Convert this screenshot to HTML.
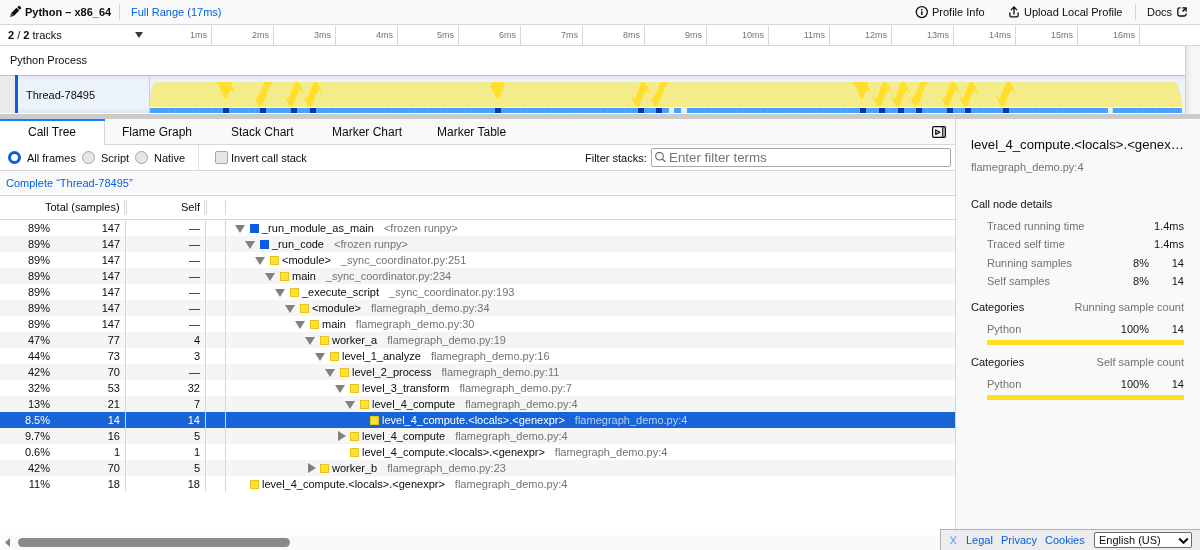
<!DOCTYPE html>
<html><head><meta charset="utf-8"><style>
*{box-sizing:border-box;margin:0;padding:0}
html,body{width:1200px;height:550px;overflow:hidden;background:#fff;will-change:transform;font-family:"Liberation Sans",sans-serif;font-size:11px;color:#0c0c0d;position:relative}
.a{position:absolute;white-space:nowrap}
.blue{color:#0060df}
.hl{position:absolute;height:1px}
.vl{position:absolute;width:1px}
.tlabel{position:absolute;top:30px;color:#737373;font-size:9px;line-height:10px;text-align:right;width:40px}
.tab{top:119px;height:26px;font-size:12px;line-height:26px}
.row{left:0;width:955px;height:16px;font-size:11px;line-height:16px}
.row.odd{background:#f5f5f5}
.row.sel{background:#1863d6;color:#fff}
.c{position:absolute;top:0;height:16px}
.pct{right:905px;text-align:right}
.cnt{right:835px;text-align:right}
.slf{right:755px;text-align:right}
.rv{position:absolute;top:0;width:1px;height:16px;background:#d7d7db}
.sq{position:absolute;top:4px;width:9px;height:9px}
.y{background:#ffe22e;border:1px solid #e3c41c}
.b{background:#0b5be3}
.tri{position:absolute;top:5px;width:0;height:0;border-left:5px solid transparent;border-right:5px solid transparent;border-top:8px solid #808080}
.trr{position:absolute;top:3px;width:0;height:0;border-top:5px solid transparent;border-bottom:5px solid transparent;border-left:8px solid #808080}
.fn{position:absolute;top:0}
.lib{color:#737373;margin-left:10px}
.sel .lib{color:#b9d1f5}
.sd{color:#737373}
</style></head><body>
<div class="a" style="left:0;top:0;width:1200px;height:24px;background:#f9f9fa"></div>
<div class="hl" style="left:0;top:24px;width:1200px;background:#d7d7db"></div>
<svg class="a" style="left:6px;top:4px" width="20" height="16" viewBox="6 4 20 16"><g transform="rotate(45 15.25 11.8)"><rect x="13.3" y="4.6" width="3.9" height="2.7" rx="1.4" fill="#0c0c0d"/><rect x="13.3" y="8.1" width="3.9" height="7.3" fill="#0c0c0d"/><path d="M13.3 15.4 L17.2 15.4 L15.25 19 Z" fill="#0c0c0d"/><circle cx="15.25" cy="16.3" r="0.55" fill="#f9f9fa"/></g></svg>
<div class="a" style="left:25px;top:6px;font-weight:bold">Python – x86_64</div>
<div class="vl" style="left:119px;top:4px;height:16px;background:#d7d7db"></div>
<div class="a blue" style="left:131px;top:6px">Full Range (17ms)</div>
<svg class="a" style="left:912px;top:2px" width="20" height="20" viewBox="912 2 20 20"><circle cx="921.8" cy="12.1" r="5.55" fill="none" stroke="#0c0c0d" stroke-width="1.3"/><ellipse cx="921.8" cy="9.8" rx="0.95" ry="0.7" fill="#0c0c0d"/><rect x="921.05" y="11.3" width="1.5" height="3.6" fill="#0c0c0d"/></svg>
<div class="a" style="left:932px;top:6px">Profile Info</div>
<svg class="a" style="left:1004px;top:2px" width="20" height="20" viewBox="1004 2 20 20"><path d="M1009.9 12.4 V15.5 Q1009.9 16.8 1011.2 16.8 H1016.8 Q1018.1 16.8 1018.1 15.5 V12.4" fill="none" stroke="#0c0c0d" stroke-width="1.3"/><path d="M1014 14.4 V7.2 M1010.9 10.1 L1014 7 L1017.1 10.1" fill="none" stroke="#0c0c0d" stroke-width="1.3"/></svg>
<div class="a" style="left:1024px;top:6px">Upload Local Profile</div>
<div class="vl" style="left:1135px;top:4px;height:16px;background:#d7d7db"></div>
<div class="a" style="left:1147px;top:6px">Docs</div>
<svg class="a" style="left:1172px;top:2px" width="20" height="20" viewBox="1172 2 20 20"><path d="M1180.6 7.8 H1179.6 Q1177.8 7.8 1177.8 9.6 V14.3 Q1177.8 16 1179.6 16 H1184.3 Q1186.1 16 1186.1 14.2 V13.5" fill="none" stroke="#0c0c0d" stroke-width="1.3"/><path d="M1182.2 7.8 H1186.1 V11.7" fill="none" stroke="#0c0c0d" stroke-width="1.3"/><path d="M1182.6 11.4 L1185.8 8.2" fill="none" stroke="#0c0c0d" stroke-width="1.5"/></svg>
<div class="a" style="left:0;top:25px;width:1200px;height:20px;background:#fff"></div>
<div class="hl" style="left:0;top:45px;width:1200px;background:#d7d7db"></div>
<div class="a" style="left:8px;top:29px"><b>2</b> / <b>2</b> tracks</div>
<svg class="a" style="left:135px;top:32px" width="8" height="6" viewBox="0 0 8 6"><path d="M0 0 H8 L4 6 Z" fill="#38383d"/></svg>
<div class="vl" style="left:211px;top:26px;height:19px;background:#d7d7db"></div>
<div class="tlabel" style="left:167px;top:30px">1ms</div>
<div class="vl" style="left:273px;top:26px;height:19px;background:#d7d7db"></div>
<div class="tlabel" style="left:229px;top:30px">2ms</div>
<div class="vl" style="left:335px;top:26px;height:19px;background:#d7d7db"></div>
<div class="tlabel" style="left:291px;top:30px">3ms</div>
<div class="vl" style="left:397px;top:26px;height:19px;background:#d7d7db"></div>
<div class="tlabel" style="left:353px;top:30px">4ms</div>
<div class="vl" style="left:458px;top:26px;height:19px;background:#d7d7db"></div>
<div class="tlabel" style="left:414px;top:30px">5ms</div>
<div class="vl" style="left:520px;top:26px;height:19px;background:#d7d7db"></div>
<div class="tlabel" style="left:476px;top:30px">6ms</div>
<div class="vl" style="left:582px;top:26px;height:19px;background:#d7d7db"></div>
<div class="tlabel" style="left:538px;top:30px">7ms</div>
<div class="vl" style="left:644px;top:26px;height:19px;background:#d7d7db"></div>
<div class="tlabel" style="left:600px;top:30px">8ms</div>
<div class="vl" style="left:706px;top:26px;height:19px;background:#d7d7db"></div>
<div class="tlabel" style="left:662px;top:30px">9ms</div>
<div class="vl" style="left:768px;top:26px;height:19px;background:#d7d7db"></div>
<div class="tlabel" style="left:724px;top:30px">10ms</div>
<div class="vl" style="left:829px;top:26px;height:19px;background:#d7d7db"></div>
<div class="tlabel" style="left:785px;top:30px">11ms</div>
<div class="vl" style="left:891px;top:26px;height:19px;background:#d7d7db"></div>
<div class="tlabel" style="left:847px;top:30px">12ms</div>
<div class="vl" style="left:953px;top:26px;height:19px;background:#d7d7db"></div>
<div class="tlabel" style="left:909px;top:30px">13ms</div>
<div class="vl" style="left:1015px;top:26px;height:19px;background:#d7d7db"></div>
<div class="tlabel" style="left:971px;top:30px">14ms</div>
<div class="vl" style="left:1077px;top:26px;height:19px;background:#d7d7db"></div>
<div class="tlabel" style="left:1033px;top:30px">15ms</div>
<div class="vl" style="left:1139px;top:26px;height:19px;background:#d7d7db"></div>
<div class="tlabel" style="left:1095px;top:30px">16ms</div>
<div class="a" style="left:0;top:46px;width:1185px;height:29px;background:#fff"></div>
<div class="hl" style="left:0;top:75px;width:1185px;background:#c2c2c6"></div>
<div class="a" style="left:10px;top:54px">Python Process</div>
<div class="a" style="left:1185px;top:46px;width:15px;height:68px;background:linear-gradient(to right,#e4e4e4,#f4f4f4 40%,#f7f7f7)"></div>
<div class="vl" style="left:1185px;top:46px;height:68px;background:#d0d0d0"></div>
<div class="a" style="left:0;top:76px;width:15px;height:37px;background:#ebebed"></div>
<div class="a" style="left:15px;top:75px;width:3px;height:38px;background:#0a5ce0"></div>
<div class="a" style="left:18px;top:76px;width:131px;height:37px;background:linear-gradient(#dfe6ef,#ecf3fc 5px,#ecf3fc 31px,#dde4ee 37px)"></div>
<div class="vl" style="left:149px;top:76px;height:38px;background:#cdd0d6"></div>
<div class="a" style="left:26px;top:89px">Thread-78495</div>
<div class="a" style="left:150px;top:76px;width:1035px;height:38px;background:linear-gradient(#dfe6ef,#ebf3fd 5px)"></div>
<svg class="a" style="left:150px;top:76px" width="1035" height="38" viewBox="150 76 1035 38"><path d="M150 107 C150 90 152 82 158 82 L1175 82 C1178 82 1181 95 1183 107 Z" fill="#f4ec8b"/><clipPath id="cp"><rect x="150" y="82" width="1035" height="25"/></clipPath><g clip-path="url(#cp)"><path d="M217.00 82.00 C219.00 81.55 226.99 81.46 229.60 82.00 C232.21 82.54 230.82 83.34 231.50 85.00 C232.18 86.66 233.44 90.39 233.40 91.20 C233.36 92.01 232.18 89.18 231.30 89.50 C230.42 89.82 229.36 91.47 228.50 93.00 C227.64 94.53 227.04 96.92 226.50 98.00 C225.96 99.08 225.86 99.00 225.50 99.00 C225.14 99.00 225.31 99.62 224.50 98.00 C223.69 96.38 222.08 92.43 221.00 90.00 C219.92 87.57 219.22 85.94 218.50 84.50 C217.78 83.06 215.00 82.45 217.00 82.00 Z" fill="#ffdf2b" stroke="#ffdf2b" stroke-width="0.6" stroke-linejoin="round"/><path d="M853.30 82.00 C855.30 81.55 863.29 81.46 865.90 82.00 C868.51 82.54 867.12 83.34 867.80 85.00 C868.48 86.66 869.74 90.39 869.70 91.20 C869.66 92.01 868.48 89.18 867.60 89.50 C866.72 89.82 865.66 91.47 864.80 93.00 C863.94 94.53 863.34 96.92 862.80 98.00 C862.26 99.08 862.16 99.00 861.80 99.00 C861.44 99.00 861.61 99.62 860.80 98.00 C859.99 96.38 858.38 92.43 857.30 90.00 C856.22 87.57 855.52 85.94 854.80 84.50 C854.08 83.06 851.30 82.45 853.30 82.00 Z" fill="#ffdf2b" stroke="#ffdf2b" stroke-width="0.6" stroke-linejoin="round"/><path d="M284.90 96.30 C284.99 96.01 286.68 98.53 287.40 98.80 C288.12 99.07 288.34 98.61 288.90 97.80 C289.46 96.99 289.94 95.76 290.50 94.30 C291.06 92.84 291.46 91.27 292.00 89.70 C292.54 88.13 292.85 86.93 293.50 85.60 C294.15 84.27 294.77 82.89 295.60 82.30 C296.43 81.71 297.38 81.89 298.10 82.30 C298.82 82.71 299.04 83.65 299.60 84.60 C300.16 85.55 300.62 86.00 301.20 87.60 C301.78 89.20 302.94 93.18 302.80 93.50 C302.66 93.82 301.07 89.85 300.40 89.40 C299.73 88.95 299.69 90.12 299.10 91.00 C298.51 91.88 297.82 92.81 297.10 94.30 C296.38 95.79 295.93 97.28 295.10 99.30 C294.27 101.32 293.38 104.29 292.50 105.50 C291.62 106.71 290.94 106.29 290.20 106.00 C289.46 105.71 288.99 104.91 288.40 103.90 C287.81 102.89 287.53 101.77 286.90 100.40 C286.27 99.03 284.81 96.59 284.90 96.30 Z" fill="#ffdf2b" stroke="#ffdf2b" stroke-width="0.6" stroke-linejoin="round"/><path d="M303.70 96.30 C303.79 96.01 305.48 98.53 306.20 98.80 C306.92 99.07 307.14 98.61 307.70 97.80 C308.26 96.99 308.74 95.76 309.30 94.30 C309.86 92.84 310.26 91.27 310.80 89.70 C311.34 88.13 311.65 86.93 312.30 85.60 C312.95 84.27 313.57 82.89 314.40 82.30 C315.23 81.71 316.18 81.89 316.90 82.30 C317.62 82.71 317.84 83.65 318.40 84.60 C318.96 85.55 319.42 86.00 320.00 87.60 C320.58 89.20 321.74 93.18 321.60 93.50 C321.46 93.82 319.87 89.85 319.20 89.40 C318.53 88.95 318.49 90.12 317.90 91.00 C317.31 91.88 316.62 92.81 315.90 94.30 C315.18 95.79 314.73 97.28 313.90 99.30 C313.07 101.32 312.18 104.29 311.30 105.50 C310.42 106.71 309.74 106.29 309.00 106.00 C308.26 105.71 307.79 104.91 307.20 103.90 C306.61 102.89 306.33 101.77 305.70 100.40 C305.07 99.03 303.61 96.59 303.70 96.30 Z" fill="#ffdf2b" stroke="#ffdf2b" stroke-width="0.6" stroke-linejoin="round"/><path d="M631.40 96.30 C631.49 96.01 633.18 98.53 633.90 98.80 C634.62 99.07 634.84 98.61 635.40 97.80 C635.96 96.99 636.44 95.76 637.00 94.30 C637.56 92.84 637.96 91.27 638.50 89.70 C639.04 88.13 639.35 86.93 640.00 85.60 C640.65 84.27 641.27 82.89 642.10 82.30 C642.93 81.71 643.88 81.89 644.60 82.30 C645.32 82.71 645.54 83.65 646.10 84.60 C646.66 85.55 647.12 86.00 647.70 87.60 C648.28 89.20 649.44 93.18 649.30 93.50 C649.16 93.82 647.57 89.85 646.90 89.40 C646.23 88.95 646.19 90.12 645.60 91.00 C645.01 91.88 644.32 92.81 643.60 94.30 C642.88 95.79 642.43 97.28 641.60 99.30 C640.77 101.32 639.88 104.29 639.00 105.50 C638.12 106.71 637.44 106.29 636.70 106.00 C635.96 105.71 635.49 104.91 634.90 103.90 C634.31 102.89 634.03 101.77 633.40 100.40 C632.77 99.03 631.31 96.59 631.40 96.30 Z" fill="#ffdf2b" stroke="#ffdf2b" stroke-width="0.6" stroke-linejoin="round"/><path d="M873.00 96.30 C873.09 96.01 874.78 98.53 875.50 98.80 C876.22 99.07 876.44 98.61 877.00 97.80 C877.56 96.99 878.04 95.76 878.60 94.30 C879.16 92.84 879.56 91.27 880.10 89.70 C880.64 88.13 880.95 86.93 881.60 85.60 C882.25 84.27 882.87 82.89 883.70 82.30 C884.53 81.71 885.48 81.89 886.20 82.30 C886.92 82.71 887.14 83.65 887.70 84.60 C888.26 85.55 888.72 86.00 889.30 87.60 C889.88 89.20 891.04 93.18 890.90 93.50 C890.76 93.82 889.17 89.85 888.50 89.40 C887.83 88.95 887.79 90.12 887.20 91.00 C886.61 91.88 885.92 92.81 885.20 94.30 C884.48 95.79 884.03 97.28 883.20 99.30 C882.37 101.32 881.48 104.29 880.60 105.50 C879.72 106.71 879.04 106.29 878.30 106.00 C877.56 105.71 877.09 104.91 876.50 103.90 C875.91 102.89 875.63 101.77 875.00 100.40 C874.37 99.03 872.91 96.59 873.00 96.30 Z" fill="#ffdf2b" stroke="#ffdf2b" stroke-width="0.6" stroke-linejoin="round"/><path d="M891.40 96.30 C891.49 96.01 893.18 98.53 893.90 98.80 C894.62 99.07 894.84 98.61 895.40 97.80 C895.96 96.99 896.44 95.76 897.00 94.30 C897.56 92.84 897.96 91.27 898.50 89.70 C899.04 88.13 899.35 86.93 900.00 85.60 C900.65 84.27 901.27 82.89 902.10 82.30 C902.93 81.71 903.88 81.89 904.60 82.30 C905.32 82.71 905.54 83.65 906.10 84.60 C906.66 85.55 907.12 86.00 907.70 87.60 C908.28 89.20 909.44 93.18 909.30 93.50 C909.16 93.82 907.57 89.85 906.90 89.40 C906.23 88.95 906.19 90.12 905.60 91.00 C905.01 91.88 904.32 92.81 903.60 94.30 C902.88 95.79 902.43 97.28 901.60 99.30 C900.77 101.32 899.88 104.29 899.00 105.50 C898.12 106.71 897.44 106.29 896.70 106.00 C895.96 105.71 895.49 104.91 894.90 103.90 C894.31 102.89 894.03 101.77 893.40 100.40 C892.77 99.03 891.31 96.59 891.40 96.30 Z" fill="#ffdf2b" stroke="#ffdf2b" stroke-width="0.6" stroke-linejoin="round"/><path d="M941.00 96.30 C941.09 96.01 942.78 98.53 943.50 98.80 C944.22 99.07 944.44 98.61 945.00 97.80 C945.56 96.99 946.04 95.76 946.60 94.30 C947.16 92.84 947.56 91.27 948.10 89.70 C948.64 88.13 948.95 86.93 949.60 85.60 C950.25 84.27 950.87 82.89 951.70 82.30 C952.53 81.71 953.48 81.89 954.20 82.30 C954.92 82.71 955.14 83.65 955.70 84.60 C956.26 85.55 956.72 86.00 957.30 87.60 C957.88 89.20 959.04 93.18 958.90 93.50 C958.76 93.82 957.17 89.85 956.50 89.40 C955.83 88.95 955.79 90.12 955.20 91.00 C954.61 91.88 953.92 92.81 953.20 94.30 C952.48 95.79 952.03 97.28 951.20 99.30 C950.37 101.32 949.48 104.29 948.60 105.50 C947.72 106.71 947.04 106.29 946.30 106.00 C945.56 105.71 945.09 104.91 944.50 103.90 C943.91 102.89 943.63 101.77 943.00 100.40 C942.37 99.03 940.91 96.59 941.00 96.30 Z" fill="#ffdf2b" stroke="#ffdf2b" stroke-width="0.6" stroke-linejoin="round"/><path d="M959.30 96.30 C959.39 96.01 961.08 98.53 961.80 98.80 C962.52 99.07 962.74 98.61 963.30 97.80 C963.86 96.99 964.34 95.76 964.90 94.30 C965.46 92.84 965.86 91.27 966.40 89.70 C966.94 88.13 967.25 86.93 967.90 85.60 C968.55 84.27 969.17 82.89 970.00 82.30 C970.83 81.71 971.78 81.89 972.50 82.30 C973.22 82.71 973.44 83.65 974.00 84.60 C974.56 85.55 975.02 86.00 975.60 87.60 C976.18 89.20 977.34 93.18 977.20 93.50 C977.06 93.82 975.47 89.85 974.80 89.40 C974.13 88.95 974.09 90.12 973.50 91.00 C972.91 91.88 972.22 92.81 971.50 94.30 C970.78 95.79 970.33 97.28 969.50 99.30 C968.67 101.32 967.78 104.29 966.90 105.50 C966.02 106.71 965.34 106.29 964.60 106.00 C963.86 105.71 963.39 104.91 962.80 103.90 C962.21 102.89 961.93 101.77 961.30 100.40 C960.67 99.03 959.21 96.59 959.30 96.30 Z" fill="#ffdf2b" stroke="#ffdf2b" stroke-width="0.6" stroke-linejoin="round"/><path d="M996.50 96.30 C996.59 96.01 998.28 98.53 999.00 98.80 C999.72 99.07 999.94 98.61 1000.50 97.80 C1001.06 96.99 1001.54 95.76 1002.10 94.30 C1002.66 92.84 1003.06 91.27 1003.60 89.70 C1004.14 88.13 1004.45 86.93 1005.10 85.60 C1005.75 84.27 1006.37 82.89 1007.20 82.30 C1008.03 81.71 1008.98 81.89 1009.70 82.30 C1010.42 82.71 1010.64 83.65 1011.20 84.60 C1011.76 85.55 1012.22 86.00 1012.80 87.60 C1013.38 89.20 1014.54 93.18 1014.40 93.50 C1014.26 93.82 1012.67 89.85 1012.00 89.40 C1011.33 88.95 1011.29 90.12 1010.70 91.00 C1010.11 91.88 1009.42 92.81 1008.70 94.30 C1007.98 95.79 1007.53 97.28 1006.70 99.30 C1005.87 101.32 1004.98 104.29 1004.10 105.50 C1003.22 106.71 1002.54 106.29 1001.80 106.00 C1001.06 105.71 1000.59 104.91 1000.00 103.90 C999.41 102.89 999.13 101.77 998.50 100.40 C997.87 99.03 996.41 96.59 996.50 96.30 Z" fill="#ffdf2b" stroke="#ffdf2b" stroke-width="0.6" stroke-linejoin="round"/><path d="M254.50 97.50 C254.59 97.14 255.67 99.49 256.80 98.50 C257.93 97.51 259.63 94.25 260.80 92.00 C261.97 89.75 262.49 87.80 263.30 86.00 C264.11 84.20 263.66 82.72 265.30 82.00 C266.94 81.28 271.68 81.28 272.40 82.00 C273.12 82.72 270.31 84.20 269.30 86.00 C268.29 87.80 267.79 89.41 266.80 92.00 C265.81 94.59 264.97 97.97 263.80 100.40 C262.63 102.83 261.11 104.49 260.30 105.50 C259.49 106.51 259.75 106.18 259.30 106.00 C258.85 105.82 258.34 105.49 257.80 104.50 C257.26 103.51 256.89 101.76 256.30 100.50 C255.71 99.24 254.41 97.86 254.50 97.50 Z" fill="#ffdf2b" stroke="#ffdf2b" stroke-width="0.6" stroke-linejoin="round"/><path d="M650.50 97.50 C650.59 97.14 651.67 99.49 652.80 98.50 C653.93 97.51 655.63 94.25 656.80 92.00 C657.97 89.75 658.49 87.80 659.30 86.00 C660.11 84.20 659.66 82.72 661.30 82.00 C662.94 81.28 667.68 81.28 668.40 82.00 C669.12 82.72 666.31 84.20 665.30 86.00 C664.29 87.80 663.79 89.41 662.80 92.00 C661.81 94.59 660.97 97.97 659.80 100.40 C658.63 102.83 657.11 104.49 656.30 105.50 C655.49 106.51 655.75 106.18 655.30 106.00 C654.85 105.82 654.34 105.49 653.80 104.50 C653.26 103.51 652.89 101.76 652.30 100.50 C651.71 99.24 650.41 97.86 650.50 97.50 Z" fill="#ffdf2b" stroke="#ffdf2b" stroke-width="0.6" stroke-linejoin="round"/><path d="M910.20 97.50 C910.29 97.14 911.37 99.49 912.50 98.50 C913.63 97.51 915.33 94.25 916.50 92.00 C917.67 89.75 918.19 87.80 919.00 86.00 C919.81 84.20 919.36 82.72 921.00 82.00 C922.64 81.28 927.38 81.28 928.10 82.00 C928.82 82.72 926.01 84.20 925.00 86.00 C923.99 87.80 923.49 89.41 922.50 92.00 C921.51 94.59 920.67 97.97 919.50 100.40 C918.33 102.83 916.81 104.49 916.00 105.50 C915.19 106.51 915.45 106.18 915.00 106.00 C914.55 105.82 914.04 105.49 913.50 104.50 C912.96 103.51 912.59 101.76 912.00 100.50 C911.41 99.24 910.11 97.86 910.20 97.50 Z" fill="#ffdf2b" stroke="#ffdf2b" stroke-width="0.6" stroke-linejoin="round"/><path d="M494.00 82.00 C495.71 81.64 499.63 81.64 501.30 82.00 C502.97 82.36 502.83 83.10 503.30 84.00 C503.77 84.90 504.17 85.56 503.90 87.00 C503.63 88.44 502.63 90.20 501.80 92.00 C500.97 93.80 500.02 95.72 499.30 97.00 C498.58 98.28 498.34 99.10 497.80 99.10 C497.26 99.10 497.02 98.28 496.30 97.00 C495.58 95.72 494.74 93.80 493.80 92.00 C492.86 90.20 491.46 88.44 491.10 87.00 C490.74 85.56 491.28 84.90 491.80 84.00 C492.32 83.10 492.29 82.36 494.00 82.00 Z" fill="#ffdf2b" stroke="#ffdf2b" stroke-width="0.6" stroke-linejoin="round"/></g><rect x="150" y="107" width="1035" height="1" fill="#ffffff"/><rect x="150" y="108" width="1032" height="5" fill="#45a1ff"/><rect x="669" y="108" width="5" height="5" fill="#e9f0fa"/><rect x="681" y="108" width="6" height="5" fill="#e9f0fa"/><rect x="1108" y="108" width="5" height="5" fill="#e9f0fa"/><rect x="150.0" y="108" width="0.6" height="5" fill="#6fb6ff" opacity="0.6"/><rect x="156.2" y="108" width="0.6" height="5" fill="#6fb6ff" opacity="0.6"/><rect x="162.3" y="108" width="0.6" height="5" fill="#6fb6ff" opacity="0.6"/><rect x="168.5" y="108" width="0.6" height="5" fill="#6fb6ff" opacity="0.6"/><rect x="174.7" y="108" width="0.6" height="5" fill="#6fb6ff" opacity="0.6"/><rect x="180.8" y="108" width="0.6" height="5" fill="#6fb6ff" opacity="0.6"/><rect x="187.0" y="108" width="0.6" height="5" fill="#6fb6ff" opacity="0.6"/><rect x="193.2" y="108" width="0.6" height="5" fill="#6fb6ff" opacity="0.6"/><rect x="199.4" y="108" width="0.6" height="5" fill="#6fb6ff" opacity="0.6"/><rect x="205.5" y="108" width="0.6" height="5" fill="#6fb6ff" opacity="0.6"/><rect x="211.7" y="108" width="0.6" height="5" fill="#6fb6ff" opacity="0.6"/><rect x="217.9" y="108" width="0.6" height="5" fill="#6fb6ff" opacity="0.6"/><rect x="224.0" y="108" width="0.6" height="5" fill="#6fb6ff" opacity="0.6"/><rect x="230.2" y="108" width="0.6" height="5" fill="#6fb6ff" opacity="0.6"/><rect x="236.4" y="108" width="0.6" height="5" fill="#6fb6ff" opacity="0.6"/><rect x="242.5" y="108" width="0.6" height="5" fill="#6fb6ff" opacity="0.6"/><rect x="248.7" y="108" width="0.6" height="5" fill="#6fb6ff" opacity="0.6"/><rect x="254.9" y="108" width="0.6" height="5" fill="#6fb6ff" opacity="0.6"/><rect x="261.1" y="108" width="0.6" height="5" fill="#6fb6ff" opacity="0.6"/><rect x="267.2" y="108" width="0.6" height="5" fill="#6fb6ff" opacity="0.6"/><rect x="273.4" y="108" width="0.6" height="5" fill="#6fb6ff" opacity="0.6"/><rect x="279.6" y="108" width="0.6" height="5" fill="#6fb6ff" opacity="0.6"/><rect x="285.7" y="108" width="0.6" height="5" fill="#6fb6ff" opacity="0.6"/><rect x="291.9" y="108" width="0.6" height="5" fill="#6fb6ff" opacity="0.6"/><rect x="298.1" y="108" width="0.6" height="5" fill="#6fb6ff" opacity="0.6"/><rect x="304.2" y="108" width="0.6" height="5" fill="#6fb6ff" opacity="0.6"/><rect x="310.4" y="108" width="0.6" height="5" fill="#6fb6ff" opacity="0.6"/><rect x="316.6" y="108" width="0.6" height="5" fill="#6fb6ff" opacity="0.6"/><rect x="322.8" y="108" width="0.6" height="5" fill="#6fb6ff" opacity="0.6"/><rect x="328.9" y="108" width="0.6" height="5" fill="#6fb6ff" opacity="0.6"/><rect x="335.1" y="108" width="0.6" height="5" fill="#6fb6ff" opacity="0.6"/><rect x="341.3" y="108" width="0.6" height="5" fill="#6fb6ff" opacity="0.6"/><rect x="347.4" y="108" width="0.6" height="5" fill="#6fb6ff" opacity="0.6"/><rect x="353.6" y="108" width="0.6" height="5" fill="#6fb6ff" opacity="0.6"/><rect x="359.8" y="108" width="0.6" height="5" fill="#6fb6ff" opacity="0.6"/><rect x="366.0" y="108" width="0.6" height="5" fill="#6fb6ff" opacity="0.6"/><rect x="372.1" y="108" width="0.6" height="5" fill="#6fb6ff" opacity="0.6"/><rect x="378.3" y="108" width="0.6" height="5" fill="#6fb6ff" opacity="0.6"/><rect x="384.5" y="108" width="0.6" height="5" fill="#6fb6ff" opacity="0.6"/><rect x="390.6" y="108" width="0.6" height="5" fill="#6fb6ff" opacity="0.6"/><rect x="396.8" y="108" width="0.6" height="5" fill="#6fb6ff" opacity="0.6"/><rect x="403.0" y="108" width="0.6" height="5" fill="#6fb6ff" opacity="0.6"/><rect x="409.1" y="108" width="0.6" height="5" fill="#6fb6ff" opacity="0.6"/><rect x="415.3" y="108" width="0.6" height="5" fill="#6fb6ff" opacity="0.6"/><rect x="421.5" y="108" width="0.6" height="5" fill="#6fb6ff" opacity="0.6"/><rect x="427.7" y="108" width="0.6" height="5" fill="#6fb6ff" opacity="0.6"/><rect x="433.8" y="108" width="0.6" height="5" fill="#6fb6ff" opacity="0.6"/><rect x="440.0" y="108" width="0.6" height="5" fill="#6fb6ff" opacity="0.6"/><rect x="446.2" y="108" width="0.6" height="5" fill="#6fb6ff" opacity="0.6"/><rect x="452.3" y="108" width="0.6" height="5" fill="#6fb6ff" opacity="0.6"/><rect x="458.5" y="108" width="0.6" height="5" fill="#6fb6ff" opacity="0.6"/><rect x="464.7" y="108" width="0.6" height="5" fill="#6fb6ff" opacity="0.6"/><rect x="470.8" y="108" width="0.6" height="5" fill="#6fb6ff" opacity="0.6"/><rect x="477.0" y="108" width="0.6" height="5" fill="#6fb6ff" opacity="0.6"/><rect x="483.2" y="108" width="0.6" height="5" fill="#6fb6ff" opacity="0.6"/><rect x="489.4" y="108" width="0.6" height="5" fill="#6fb6ff" opacity="0.6"/><rect x="495.5" y="108" width="0.6" height="5" fill="#6fb6ff" opacity="0.6"/><rect x="501.7" y="108" width="0.6" height="5" fill="#6fb6ff" opacity="0.6"/><rect x="507.9" y="108" width="0.6" height="5" fill="#6fb6ff" opacity="0.6"/><rect x="514.0" y="108" width="0.6" height="5" fill="#6fb6ff" opacity="0.6"/><rect x="520.2" y="108" width="0.6" height="5" fill="#6fb6ff" opacity="0.6"/><rect x="526.4" y="108" width="0.6" height="5" fill="#6fb6ff" opacity="0.6"/><rect x="532.5" y="108" width="0.6" height="5" fill="#6fb6ff" opacity="0.6"/><rect x="538.7" y="108" width="0.6" height="5" fill="#6fb6ff" opacity="0.6"/><rect x="544.9" y="108" width="0.6" height="5" fill="#6fb6ff" opacity="0.6"/><rect x="551.1" y="108" width="0.6" height="5" fill="#6fb6ff" opacity="0.6"/><rect x="557.2" y="108" width="0.6" height="5" fill="#6fb6ff" opacity="0.6"/><rect x="563.4" y="108" width="0.6" height="5" fill="#6fb6ff" opacity="0.6"/><rect x="569.6" y="108" width="0.6" height="5" fill="#6fb6ff" opacity="0.6"/><rect x="575.7" y="108" width="0.6" height="5" fill="#6fb6ff" opacity="0.6"/><rect x="581.9" y="108" width="0.6" height="5" fill="#6fb6ff" opacity="0.6"/><rect x="588.1" y="108" width="0.6" height="5" fill="#6fb6ff" opacity="0.6"/><rect x="594.2" y="108" width="0.6" height="5" fill="#6fb6ff" opacity="0.6"/><rect x="600.4" y="108" width="0.6" height="5" fill="#6fb6ff" opacity="0.6"/><rect x="606.6" y="108" width="0.6" height="5" fill="#6fb6ff" opacity="0.6"/><rect x="612.7" y="108" width="0.6" height="5" fill="#6fb6ff" opacity="0.6"/><rect x="618.9" y="108" width="0.6" height="5" fill="#6fb6ff" opacity="0.6"/><rect x="625.1" y="108" width="0.6" height="5" fill="#6fb6ff" opacity="0.6"/><rect x="631.3" y="108" width="0.6" height="5" fill="#6fb6ff" opacity="0.6"/><rect x="637.4" y="108" width="0.6" height="5" fill="#6fb6ff" opacity="0.6"/><rect x="643.6" y="108" width="0.6" height="5" fill="#6fb6ff" opacity="0.6"/><rect x="649.8" y="108" width="0.6" height="5" fill="#6fb6ff" opacity="0.6"/><rect x="655.9" y="108" width="0.6" height="5" fill="#6fb6ff" opacity="0.6"/><rect x="662.1" y="108" width="0.6" height="5" fill="#6fb6ff" opacity="0.6"/><rect x="668.3" y="108" width="0.6" height="5" fill="#6fb6ff" opacity="0.6"/><rect x="674.4" y="108" width="0.6" height="5" fill="#6fb6ff" opacity="0.6"/><rect x="680.6" y="108" width="0.6" height="5" fill="#6fb6ff" opacity="0.6"/><rect x="686.8" y="108" width="0.6" height="5" fill="#6fb6ff" opacity="0.6"/><rect x="693.0" y="108" width="0.6" height="5" fill="#6fb6ff" opacity="0.6"/><rect x="699.1" y="108" width="0.6" height="5" fill="#6fb6ff" opacity="0.6"/><rect x="705.3" y="108" width="0.6" height="5" fill="#6fb6ff" opacity="0.6"/><rect x="711.5" y="108" width="0.6" height="5" fill="#6fb6ff" opacity="0.6"/><rect x="717.6" y="108" width="0.6" height="5" fill="#6fb6ff" opacity="0.6"/><rect x="723.8" y="108" width="0.6" height="5" fill="#6fb6ff" opacity="0.6"/><rect x="730.0" y="108" width="0.6" height="5" fill="#6fb6ff" opacity="0.6"/><rect x="736.1" y="108" width="0.6" height="5" fill="#6fb6ff" opacity="0.6"/><rect x="742.3" y="108" width="0.6" height="5" fill="#6fb6ff" opacity="0.6"/><rect x="748.5" y="108" width="0.6" height="5" fill="#6fb6ff" opacity="0.6"/><rect x="754.7" y="108" width="0.6" height="5" fill="#6fb6ff" opacity="0.6"/><rect x="760.8" y="108" width="0.6" height="5" fill="#6fb6ff" opacity="0.6"/><rect x="767.0" y="108" width="0.6" height="5" fill="#6fb6ff" opacity="0.6"/><rect x="773.2" y="108" width="0.6" height="5" fill="#6fb6ff" opacity="0.6"/><rect x="779.3" y="108" width="0.6" height="5" fill="#6fb6ff" opacity="0.6"/><rect x="785.5" y="108" width="0.6" height="5" fill="#6fb6ff" opacity="0.6"/><rect x="791.7" y="108" width="0.6" height="5" fill="#6fb6ff" opacity="0.6"/><rect x="797.8" y="108" width="0.6" height="5" fill="#6fb6ff" opacity="0.6"/><rect x="804.0" y="108" width="0.6" height="5" fill="#6fb6ff" opacity="0.6"/><rect x="810.2" y="108" width="0.6" height="5" fill="#6fb6ff" opacity="0.6"/><rect x="816.4" y="108" width="0.6" height="5" fill="#6fb6ff" opacity="0.6"/><rect x="822.5" y="108" width="0.6" height="5" fill="#6fb6ff" opacity="0.6"/><rect x="828.7" y="108" width="0.6" height="5" fill="#6fb6ff" opacity="0.6"/><rect x="834.9" y="108" width="0.6" height="5" fill="#6fb6ff" opacity="0.6"/><rect x="841.0" y="108" width="0.6" height="5" fill="#6fb6ff" opacity="0.6"/><rect x="847.2" y="108" width="0.6" height="5" fill="#6fb6ff" opacity="0.6"/><rect x="853.4" y="108" width="0.6" height="5" fill="#6fb6ff" opacity="0.6"/><rect x="859.5" y="108" width="0.6" height="5" fill="#6fb6ff" opacity="0.6"/><rect x="865.7" y="108" width="0.6" height="5" fill="#6fb6ff" opacity="0.6"/><rect x="871.9" y="108" width="0.6" height="5" fill="#6fb6ff" opacity="0.6"/><rect x="878.1" y="108" width="0.6" height="5" fill="#6fb6ff" opacity="0.6"/><rect x="884.2" y="108" width="0.6" height="5" fill="#6fb6ff" opacity="0.6"/><rect x="890.4" y="108" width="0.6" height="5" fill="#6fb6ff" opacity="0.6"/><rect x="896.6" y="108" width="0.6" height="5" fill="#6fb6ff" opacity="0.6"/><rect x="902.7" y="108" width="0.6" height="5" fill="#6fb6ff" opacity="0.6"/><rect x="908.9" y="108" width="0.6" height="5" fill="#6fb6ff" opacity="0.6"/><rect x="915.1" y="108" width="0.6" height="5" fill="#6fb6ff" opacity="0.6"/><rect x="921.2" y="108" width="0.6" height="5" fill="#6fb6ff" opacity="0.6"/><rect x="927.4" y="108" width="0.6" height="5" fill="#6fb6ff" opacity="0.6"/><rect x="933.6" y="108" width="0.6" height="5" fill="#6fb6ff" opacity="0.6"/><rect x="939.8" y="108" width="0.6" height="5" fill="#6fb6ff" opacity="0.6"/><rect x="945.9" y="108" width="0.6" height="5" fill="#6fb6ff" opacity="0.6"/><rect x="952.1" y="108" width="0.6" height="5" fill="#6fb6ff" opacity="0.6"/><rect x="958.3" y="108" width="0.6" height="5" fill="#6fb6ff" opacity="0.6"/><rect x="964.4" y="108" width="0.6" height="5" fill="#6fb6ff" opacity="0.6"/><rect x="970.6" y="108" width="0.6" height="5" fill="#6fb6ff" opacity="0.6"/><rect x="976.8" y="108" width="0.6" height="5" fill="#6fb6ff" opacity="0.6"/><rect x="982.9" y="108" width="0.6" height="5" fill="#6fb6ff" opacity="0.6"/><rect x="989.1" y="108" width="0.6" height="5" fill="#6fb6ff" opacity="0.6"/><rect x="995.3" y="108" width="0.6" height="5" fill="#6fb6ff" opacity="0.6"/><rect x="1001.5" y="108" width="0.6" height="5" fill="#6fb6ff" opacity="0.6"/><rect x="1007.6" y="108" width="0.6" height="5" fill="#6fb6ff" opacity="0.6"/><rect x="1013.8" y="108" width="0.6" height="5" fill="#6fb6ff" opacity="0.6"/><rect x="1020.0" y="108" width="0.6" height="5" fill="#6fb6ff" opacity="0.6"/><rect x="1026.1" y="108" width="0.6" height="5" fill="#6fb6ff" opacity="0.6"/><rect x="1032.3" y="108" width="0.6" height="5" fill="#6fb6ff" opacity="0.6"/><rect x="1038.5" y="108" width="0.6" height="5" fill="#6fb6ff" opacity="0.6"/><rect x="1044.6" y="108" width="0.6" height="5" fill="#6fb6ff" opacity="0.6"/><rect x="1050.8" y="108" width="0.6" height="5" fill="#6fb6ff" opacity="0.6"/><rect x="1057.0" y="108" width="0.6" height="5" fill="#6fb6ff" opacity="0.6"/><rect x="1063.2" y="108" width="0.6" height="5" fill="#6fb6ff" opacity="0.6"/><rect x="1069.3" y="108" width="0.6" height="5" fill="#6fb6ff" opacity="0.6"/><rect x="1075.5" y="108" width="0.6" height="5" fill="#6fb6ff" opacity="0.6"/><rect x="1081.7" y="108" width="0.6" height="5" fill="#6fb6ff" opacity="0.6"/><rect x="1087.8" y="108" width="0.6" height="5" fill="#6fb6ff" opacity="0.6"/><rect x="1094.0" y="108" width="0.6" height="5" fill="#6fb6ff" opacity="0.6"/><rect x="1100.2" y="108" width="0.6" height="5" fill="#6fb6ff" opacity="0.6"/><rect x="1106.3" y="108" width="0.6" height="5" fill="#6fb6ff" opacity="0.6"/><rect x="1112.5" y="108" width="0.6" height="5" fill="#6fb6ff" opacity="0.6"/><rect x="1118.7" y="108" width="0.6" height="5" fill="#6fb6ff" opacity="0.6"/><rect x="1124.9" y="108" width="0.6" height="5" fill="#6fb6ff" opacity="0.6"/><rect x="1131.0" y="108" width="0.6" height="5" fill="#6fb6ff" opacity="0.6"/><rect x="1137.2" y="108" width="0.6" height="5" fill="#6fb6ff" opacity="0.6"/><rect x="1143.4" y="108" width="0.6" height="5" fill="#6fb6ff" opacity="0.6"/><rect x="1149.5" y="108" width="0.6" height="5" fill="#6fb6ff" opacity="0.6"/><rect x="1155.7" y="108" width="0.6" height="5" fill="#6fb6ff" opacity="0.6"/><rect x="1161.9" y="108" width="0.6" height="5" fill="#6fb6ff" opacity="0.6"/><rect x="1168.0" y="108" width="0.6" height="5" fill="#6fb6ff" opacity="0.6"/><rect x="1174.2" y="108" width="0.6" height="5" fill="#6fb6ff" opacity="0.6"/><rect x="1180.4" y="108" width="0.6" height="5" fill="#6fb6ff" opacity="0.6"/><rect x="223" y="108" width="6" height="5" fill="#0039a6"/><rect x="260" y="108" width="6" height="5" fill="#0039a6"/><rect x="291" y="108" width="6" height="5" fill="#0039a6"/><rect x="310" y="108" width="6" height="5" fill="#0039a6"/><rect x="495" y="108" width="6" height="5" fill="#0039a6"/><rect x="638" y="108" width="6" height="5" fill="#0039a6"/><rect x="656" y="108" width="6" height="5" fill="#0039a6"/><rect x="860" y="108" width="6" height="5" fill="#0039a6"/><rect x="879" y="108" width="6" height="5" fill="#0039a6"/><rect x="898" y="108" width="6" height="5" fill="#0039a6"/><rect x="916" y="108" width="6" height="5" fill="#0039a6"/><rect x="947" y="108" width="6" height="5" fill="#0039a6"/><rect x="965" y="108" width="6" height="5" fill="#0039a6"/><rect x="1003" y="108" width="6" height="5" fill="#0039a6"/><rect x="150" y="113" width="1035" height="1" fill="#ffffff"/></svg>
<div class="a" style="left:0;top:113px;width:1185px;height:1px;background:#fff"></div>
<div class="a" style="left:0;top:114px;width:1200px;height:5px;background:#cbcbcb"></div>
<div class="a" style="left:0;top:119px;width:955px;height:25px;background:#f9f9fa"></div>
<div class="hl" style="left:105px;top:144px;width:850px;background:#d7d7db"></div>
<div class="a" style="left:0;top:119px;width:104px;height:26px;background:#fff"></div>
<div class="a" style="left:0;top:119px;width:105px;height:2px;background:#0a84ff"></div>
<div class="vl" style="left:104px;top:121px;height:24px;background:#d7d7db"></div>
<div class="a tab" style="left:28px;top:119px">Call Tree</div>
<div class="a tab" style="left:122px;top:119px">Flame Graph</div>
<div class="a tab" style="left:231px;top:119px">Stack Chart</div>
<div class="a tab" style="left:332px;top:119px">Marker Chart</div>
<div class="a tab" style="left:437px;top:119px">Marker Table</div>
<svg class="a" style="left:928px;top:122px" width="22" height="20" viewBox="928 122 22 20"><rect x="943.1" y="127" width="2" height="10.2" fill="#c8c8c8"/><rect x="932.6" y="126.6" width="12.8" height="10.8" rx="1.3" fill="none" stroke="#0c0c0d" stroke-width="1.2"/><path d="M942.7 126.6 V137.4" stroke="#0c0c0d" stroke-width="1.1"/><path d="M935.7 129.9 L939.9 132.2 L935.7 134.5 Z" fill="#d4d4d4" stroke="#0c0c0d" stroke-width="1.1" stroke-linejoin="round"/></svg>
<div class="a" style="left:0;top:145px;width:955px;height:25px;background:#fff"></div>
<div class="hl" style="left:0;top:170px;width:955px;background:#d7d7db"></div>
<div class="a" style="left:8px;top:151px;width:13px;height:13px;border-radius:50%;border:3.8px solid #0a5ce0;background:#fff"></div>
<div class="a" style="left:82px;top:151px;width:13px;height:13px;border-radius:50%;border:1px solid #a5a5a5;background:#e6e6e6"></div>
<div class="a" style="left:135px;top:151px;width:13px;height:13px;border-radius:50%;border:1px solid #a5a5a5;background:#e6e6e6"></div>
<div class="a" style="left:27px;top:152px">All frames</div>
<div class="a" style="left:101px;top:152px">Script</div>
<div class="a" style="left:154px;top:152px">Native</div>
<div class="vl" style="left:198px;top:145px;height:25px;background:#e3e3e5"></div>
<div class="a" style="left:215px;top:151px;width:13px;height:13px;border-radius:2px;border:1px solid #a5a5a5;background:#e6e6e6"></div>
<div class="a" style="left:231px;top:152px">Invert call stack</div>
<div class="a" style="left:585px;top:152px">Filter stacks:</div>
<div class="a" style="left:651px;top:148px;width:300px;height:19px;background:#fff;border:1px solid #a8a8ab;border-radius:2px"></div>
<svg class="a" style="left:654px;top:152px" width="13" height="11" viewBox="0 0 13 11"><circle cx="5.5" cy="4.2" r="3.85" fill="none" stroke="#5f5f63" stroke-width="1.05"/><path d="M8.3 7 L11.5 9.9" stroke="#5f5f63" stroke-width="1.1"/></svg>
<div class="a" style="left:669px;top:150px;font-size:13.333px;color:#737373">Enter filter terms</div>
<div class="a" style="left:0;top:171px;width:955px;height:24px;background:#f9f9fa"></div>
<div class="hl" style="left:0;top:195px;width:955px;background:#d7d7db"></div>
<div class="a blue" style="left:6px;top:177px">Complete “Thread-78495”</div>
<div class="a" style="left:0;top:196px;width:955px;height:23px;background:#fff"></div>
<div class="hl" style="left:0;top:219px;width:955px;background:#d7d7db"></div>
<div class="a" style="left:45px;top:201px">Total (samples)</div>
<div class="a" style="left:181px;top:201px">Self</div>
<div class="vl" style="left:124px;top:200px;height:15px;background:#d7d7db"></div>
<div class="vl" style="left:126px;top:200px;height:15px;background:#d7d7db"></div>
<div class="vl" style="left:204px;top:200px;height:15px;background:#d7d7db"></div>
<div class="vl" style="left:206px;top:200px;height:15px;background:#d7d7db"></div>
<div class="vl" style="left:225px;top:200px;height:15px;background:#d7d7db"></div>
<div class="a row" style="top:220px"><i class="rv" style="left:125px"></i><i class="rv" style="left:205px"></i><i class="rv" style="left:225px"></i><span class="c pct">89%</span><span class="c cnt">147</span><span class="c slf">—</span><i class="tri" style="left:235px"></i><i class="sq b" style="left:250px"></i><span class="fn" style="left:262px">_run_module_as_main<span class="lib">&lt;frozen runpy&gt;</span></span></div>
<div class="a row odd" style="top:236px"><i class="rv" style="left:125px"></i><i class="rv" style="left:205px"></i><i class="rv" style="left:225px"></i><span class="c pct">89%</span><span class="c cnt">147</span><span class="c slf">—</span><i class="tri" style="left:245px"></i><i class="sq b" style="left:260px"></i><span class="fn" style="left:272px">_run_code<span class="lib">&lt;frozen runpy&gt;</span></span></div>
<div class="a row" style="top:252px"><i class="rv" style="left:125px"></i><i class="rv" style="left:205px"></i><i class="rv" style="left:225px"></i><span class="c pct">89%</span><span class="c cnt">147</span><span class="c slf">—</span><i class="tri" style="left:255px"></i><i class="sq y" style="left:270px"></i><span class="fn" style="left:282px">&lt;module&gt;<span class="lib">_sync_coordinator.py:251</span></span></div>
<div class="a row odd" style="top:268px"><i class="rv" style="left:125px"></i><i class="rv" style="left:205px"></i><i class="rv" style="left:225px"></i><span class="c pct">89%</span><span class="c cnt">147</span><span class="c slf">—</span><i class="tri" style="left:265px"></i><i class="sq y" style="left:280px"></i><span class="fn" style="left:292px">main<span class="lib">_sync_coordinator.py:234</span></span></div>
<div class="a row" style="top:284px"><i class="rv" style="left:125px"></i><i class="rv" style="left:205px"></i><i class="rv" style="left:225px"></i><span class="c pct">89%</span><span class="c cnt">147</span><span class="c slf">—</span><i class="tri" style="left:275px"></i><i class="sq y" style="left:290px"></i><span class="fn" style="left:302px">_execute_script<span class="lib">_sync_coordinator.py:193</span></span></div>
<div class="a row odd" style="top:300px"><i class="rv" style="left:125px"></i><i class="rv" style="left:205px"></i><i class="rv" style="left:225px"></i><span class="c pct">89%</span><span class="c cnt">147</span><span class="c slf">—</span><i class="tri" style="left:285px"></i><i class="sq y" style="left:300px"></i><span class="fn" style="left:312px">&lt;module&gt;<span class="lib">flamegraph_demo.py:34</span></span></div>
<div class="a row" style="top:316px"><i class="rv" style="left:125px"></i><i class="rv" style="left:205px"></i><i class="rv" style="left:225px"></i><span class="c pct">89%</span><span class="c cnt">147</span><span class="c slf">—</span><i class="tri" style="left:295px"></i><i class="sq y" style="left:310px"></i><span class="fn" style="left:322px">main<span class="lib">flamegraph_demo.py:30</span></span></div>
<div class="a row odd" style="top:332px"><i class="rv" style="left:125px"></i><i class="rv" style="left:205px"></i><i class="rv" style="left:225px"></i><span class="c pct">47%</span><span class="c cnt">77</span><span class="c slf">4</span><i class="tri" style="left:305px"></i><i class="sq y" style="left:320px"></i><span class="fn" style="left:332px">worker_a<span class="lib">flamegraph_demo.py:19</span></span></div>
<div class="a row" style="top:348px"><i class="rv" style="left:125px"></i><i class="rv" style="left:205px"></i><i class="rv" style="left:225px"></i><span class="c pct">44%</span><span class="c cnt">73</span><span class="c slf">3</span><i class="tri" style="left:315px"></i><i class="sq y" style="left:330px"></i><span class="fn" style="left:342px">level_1_analyze<span class="lib">flamegraph_demo.py:16</span></span></div>
<div class="a row odd" style="top:364px"><i class="rv" style="left:125px"></i><i class="rv" style="left:205px"></i><i class="rv" style="left:225px"></i><span class="c pct">42%</span><span class="c cnt">70</span><span class="c slf">—</span><i class="tri" style="left:325px"></i><i class="sq y" style="left:340px"></i><span class="fn" style="left:352px">level_2_process<span class="lib">flamegraph_demo.py:11</span></span></div>
<div class="a row" style="top:380px"><i class="rv" style="left:125px"></i><i class="rv" style="left:205px"></i><i class="rv" style="left:225px"></i><span class="c pct">32%</span><span class="c cnt">53</span><span class="c slf">32</span><i class="tri" style="left:335px"></i><i class="sq y" style="left:350px"></i><span class="fn" style="left:362px">level_3_transform<span class="lib">flamegraph_demo.py:7</span></span></div>
<div class="a row odd" style="top:396px"><i class="rv" style="left:125px"></i><i class="rv" style="left:205px"></i><i class="rv" style="left:225px"></i><span class="c pct">13%</span><span class="c cnt">21</span><span class="c slf">7</span><i class="tri" style="left:345px"></i><i class="sq y" style="left:360px"></i><span class="fn" style="left:372px">level_4_compute<span class="lib">flamegraph_demo.py:4</span></span></div>
<div class="a row sel" style="top:412px"><i class="rv" style="left:125px"></i><i class="rv" style="left:205px"></i><i class="rv" style="left:225px"></i><span class="c pct">8.5%</span><span class="c cnt">14</span><span class="c slf">14</span><i class="sq y" style="left:370px"></i><span class="fn" style="left:382px">level_4_compute.&lt;locals&gt;.&lt;genexpr&gt;<span class="lib">flamegraph_demo.py:4</span></span></div>
<div class="a row odd" style="top:428px"><i class="rv" style="left:125px"></i><i class="rv" style="left:205px"></i><i class="rv" style="left:225px"></i><span class="c pct">9.7%</span><span class="c cnt">16</span><span class="c slf">5</span><i class="trr" style="left:338px"></i><i class="sq y" style="left:350px"></i><span class="fn" style="left:362px">level_4_compute<span class="lib">flamegraph_demo.py:4</span></span></div>
<div class="a row" style="top:444px"><i class="rv" style="left:125px"></i><i class="rv" style="left:205px"></i><i class="rv" style="left:225px"></i><span class="c pct">0.6%</span><span class="c cnt">1</span><span class="c slf">1</span><i class="sq y" style="left:350px"></i><span class="fn" style="left:362px">level_4_compute.&lt;locals&gt;.&lt;genexpr&gt;<span class="lib">flamegraph_demo.py:4</span></span></div>
<div class="a row odd" style="top:460px"><i class="rv" style="left:125px"></i><i class="rv" style="left:205px"></i><i class="rv" style="left:225px"></i><span class="c pct">42%</span><span class="c cnt">70</span><span class="c slf">5</span><i class="trr" style="left:308px"></i><i class="sq y" style="left:320px"></i><span class="fn" style="left:332px">worker_b<span class="lib">flamegraph_demo.py:23</span></span></div>
<div class="a row" style="top:476px"><i class="rv" style="left:125px"></i><i class="rv" style="left:205px"></i><i class="rv" style="left:225px"></i><span class="c pct">11%</span><span class="c cnt">18</span><span class="c slf">18</span><i class="sq y" style="left:250px"></i><span class="fn" style="left:262px">level_4_compute.&lt;locals&gt;.&lt;genexpr&gt;<span class="lib">flamegraph_demo.py:4</span></span></div>
<div class="a" style="left:955px;top:119px;width:245px;height:431px;background:#f9f9fa"></div>
<div class="vl" style="left:955px;top:119px;height:431px;background:#d7d7db"></div>
<div class="a" style="left:971px;top:137px;font-size:13.2px">level_4_compute.&lt;locals&gt;.&lt;genex…</div>
<div class="a sd" style="left:971px;top:161px">flamegraph_demo.py:4</div>
<div class="a" style="left:971px;top:198px;color:#15151a">Call node details</div>
<div class="a sd" style="left:987px;top:220px">Traced running time</div>
<div class="a" style="right:16px;top:220px;color:#15151a">1.4ms</div>
<div class="a sd" style="left:987px;top:238px">Traced self time</div>
<div class="a" style="right:16px;top:238px;color:#15151a">1.4ms</div>
<div class="a sd" style="left:987px;top:257px">Running samples</div>
<div class="a" style="right:51px;top:257px;color:#15151a">8%</div>
<div class="a" style="right:16px;top:257px;color:#15151a">14</div>
<div class="a sd" style="left:987px;top:275px">Self samples</div>
<div class="a" style="right:51px;top:275px;color:#15151a">8%</div>
<div class="a" style="right:16px;top:275px;color:#15151a">14</div>
<div class="a" style="left:971px;top:301px;color:#15151a">Categories</div>
<div class="a sd" style="right:16px;top:301px">Running sample count</div>
<div class="a sd" style="left:987px;top:323px">Python</div>
<div class="a" style="right:51px;top:323px;color:#15151a">100%</div>
<div class="a" style="right:16px;top:323px;color:#15151a">14</div>
<div class="a" style="left:987px;top:340px;width:197px;height:5px;background:#ffde22"></div>
<div class="a" style="left:971px;top:356px;color:#15151a">Categories</div>
<div class="a sd" style="right:16px;top:356px">Self sample count</div>
<div class="a sd" style="left:987px;top:378px">Python</div>
<div class="a" style="right:51px;top:378px;color:#15151a">100%</div>
<div class="a" style="right:16px;top:378px;color:#15151a">14</div>
<div class="a" style="left:987px;top:395px;width:197px;height:5px;background:#ffde22"></div>
<div class="a" style="left:0;top:535px;width:940px;height:15px;background:#fafafa"></div>
<svg class="a" style="left:4px;top:537px" width="8" height="11" viewBox="0 0 8 11"><path d="M6 1 V10 L1 5.5 Z" fill="#808080"/></svg>
<div class="a" style="left:18px;top:538px;width:272px;height:9px;border-radius:4.5px;background:#8a8a8a"></div>
<div class="a" style="left:940px;top:529px;width:260px;height:21px;background:#ededf0;border-top:1px solid #b1b1b3;border-left:1px solid #b1b1b3"></div>
<svg class="a" style="left:949px;top:535px" width="9" height="10" viewBox="0 0 9 10"><path d="M1.4 1.3 L7.1 9.2 M7.1 1.3 L1.4 9.2" stroke="#5c9af0" stroke-width="1.05"/></svg>
<div class="a blue" style="left:966px;top:534px;font-size:11px">Legal</div>
<div class="a blue" style="left:1001px;top:534px;font-size:11px">Privacy</div>
<div class="a blue" style="left:1045px;top:534px;font-size:11px">Cookies</div>
<div class="a" style="left:1094px;top:532px;width:98px;height:16px;background:#fff;border:1px solid #6d6d6d;border-radius:2px"></div>
<div class="a" style="left:1099px;top:534px;font-size:11px">English (US)</div>
<svg class="a" style="left:1178px;top:537px" width="11" height="8" viewBox="0 0 11 8"><path d="M1.2 1.5 L5.5 5.8 L9.8 1.5" fill="none" stroke="#0c0c0d" stroke-width="2"/></svg>
</body></html>
